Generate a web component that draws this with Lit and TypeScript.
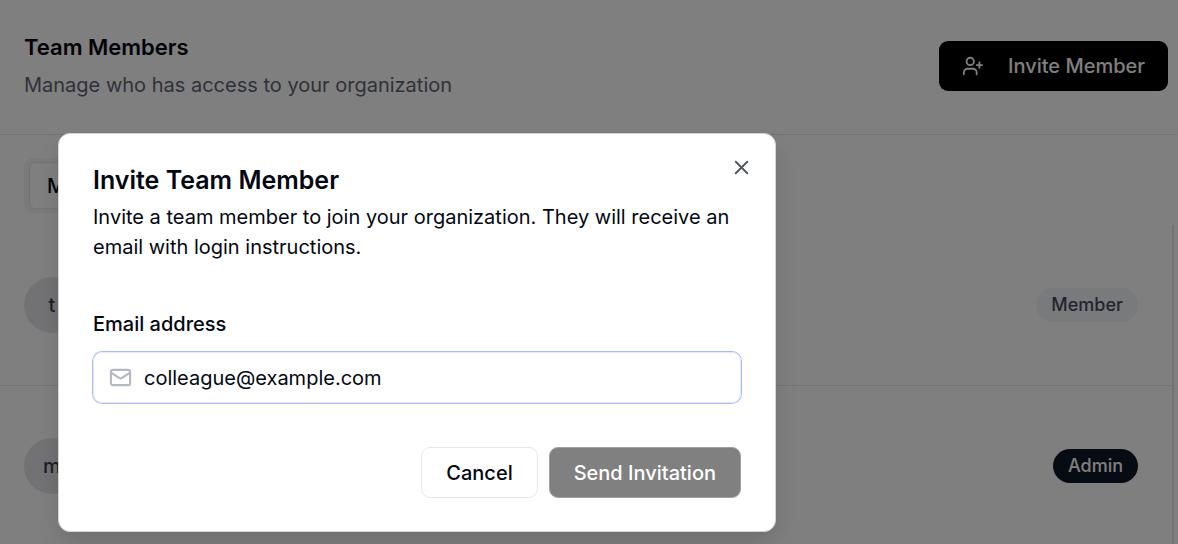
import { LitElement, html, css } from "lit";
import { customElement, property, state } from "lit/decorators.js";

type Member = { email: string; role: "Member" | "Admin" };

@customElement("member-row")
class MemberRow extends LitElement {
  @property() email = "";
  @property() role = "Member";

  static styles = css`
    :host {
      display: flex;
      align-items: center;
      justify-content: space-between;
      padding: 52px 34px 52px 24px;
      border-bottom: 1px solid #e5e7eb;
    }
    .avatar {
      display: grid;
      place-items: center;
      width: 56px;
      height: 56px;
      border-radius: 50%;
      background: #e5e5e9;
      color: #374151;
      font-size: 20px;
      font-weight: 500;
    }
    .badge {
      padding: 5px 15px;
      border-radius: 17px;
      background: #f3f4f6;
      color: #454b5b;
      font-size: 18px;
      line-height: 24px;
      font-weight: 500;
    }
    .badge.admin {
      background: #0f1626;
      color: #fff;
    }
  `;

  render() {
    return html`
      <span class="avatar">${this.email.charAt(0)}</span>
      <span class="badge ${this.role === "Admin" ? "admin" : ""}">${this.role}</span>
    `;
  }
}

@customElement("invite-dialog")
class InviteDialog extends LitElement {
  @state() private email = "";

  static styles = css`
    :host {
      display: flex;
      box-sizing: border-box;
      align-items: flex-start;
      padding: 133px 58px 0;
      background: rgba(0, 0, 0, 0.5);
    }
    .dialog {
      position: relative;
      box-sizing: border-box;
      flex: 1;
      max-width: 718px;
      padding: 32px 34px 33px;
      border: 1px solid #d4d4d4;
      border-radius: 12px;
      background: #fff;
      color: #030712;
      box-shadow: 0 12px 24px -4px rgba(0, 0, 0, 0.16);
    }
    .title {
      margin: 0;
      font-size: 25px;
      line-height: 28px;
      font-weight: 600;
    }
    .description {
      margin: 8px 0 48px;
      font-size: 20px;
      line-height: 30px;
    }
    .label {
      display: block;
      margin-bottom: 14px;
      font-size: 20px;
      line-height: 28px;
      font-weight: 500;
    }
    .field {
      display: flex;
      align-items: center;
      gap: 12px;
      box-sizing: border-box;
      height: 51px;
      padding: 0 15px;
      border: 1px solid #e5e9f2;
      border-radius: 9px;
      box-shadow: 0 0 0 1px #a3bcf9;
    }
    .field svg {
      flex: none;
      color: #b4b8c2;
    }
    .input {
      flex: 1;
      min-width: 0;
      padding: 0;
      border: 0;
      outline: 0;
      background: none;
      color: inherit;
      font: inherit;
      font-size: 20px;
    }
    .input::placeholder {
      color: #030712;
      opacity: 1;
    }
    .actions {
      display: flex;
      justify-content: flex-end;
      gap: 11px;
      margin-top: 44px;
    }
    .button {
      height: 51px;
      padding: 0 24px;
      border: 1px solid #e8e8ea;
      border-radius: 9px;
      background: #fff;
      color: #030712;
      font: inherit;
      font-size: 20px;
      font-weight: 500;
    }
    .button.primary {
      border-color: #a0a0a0;
      background: #808080;
      color: #fff;
    }
    .close {
      position: absolute;
      top: 22px;
      right: 22px;
      display: grid;
      padding: 0;
      border: 0;
      background: none;
      color: #4f535c;
    }
  `;

  render() {
    return html`
      <section class="dialog" role="dialog" aria-modal="true" aria-labelledby="title">
        <h2 class="title" id="title">Invite Team Member</h2>
        <p class="description">
          Invite a team member to join your organization. They will receive an
          email with login instructions.
        </p>
        <label class="label" for="email">Email address</label>
        <div class="field">
          <svg width="23" height="23" viewBox="0 0 24 24" fill="none" stroke="currentColor" stroke-width="2.2" stroke-linecap="round" stroke-linejoin="round">
            <rect x="2" y="4" width="20" height="16" rx="2" />
            <path d="m22 7-8.97 5.7a1.94 1.94 0 0 1-2.06 0L2 7" />
          </svg>
          <input
            class="input"
            id="email"
            type="email"
            placeholder="colleague@example.com"
            .value=${this.email}
            @input=${(e: Event) => (this.email = (e.target as HTMLInputElement).value)}
          />
        </div>
        <div class="actions">
          <button class="button" type="button">Cancel</button>
          <button class="button primary" type="button" ?disabled=${!this.email}>Send Invitation</button>
        </div>
        <button class="close" type="button" aria-label="Close">
          <svg width="23" height="23" viewBox="0 0 24 24" fill="none" stroke="currentColor" stroke-width="1.9" stroke-linecap="round">
            <path d="M18 6 6 18M6 6l12 12" />
          </svg>
        </button>
      </section>
    `;
  }
}

@customElement("app-root")
class AppRoot extends LitElement {
  private members: Member[] = [
    { email: "t", role: "Member" },
    { email: "m", role: "Admin" },
  ];

  static styles = css`
    :host {
      display: block;
      position: relative;
      height: 100vh;
      overflow: hidden;
      background: #fff;
      color: #030712;
      font-family: Inter, "Liberation Sans", sans-serif;
    }
    .header {
      display: flex;
      align-items: center;
      justify-content: space-between;
      padding: 32px 10px 34px 24px;
      border-bottom: 1px solid #e5e7eb;
    }
    .heading {
      margin: 0 0 8px;
      font-size: 22px;
      line-height: 30px;
      font-weight: 600;
    }
    .subtitle {
      margin: 0;
      color: #5f6472;
      font-size: 20px;
      line-height: 30px;
    }
    .invite {
      display: flex;
      align-items: center;
      gap: 24px;
      height: 50px;
      padding: 0 23px;
      border: 0;
      border-radius: 9px;
      background: #000;
      color: #fff;
      font: inherit;
      font-size: 20px;
      font-weight: 500;
    }
    .tabs {
      display: flex;
      width: fit-content;
      margin: 23px 24px 12px;
      padding: 4px 5px;
      border-radius: 9px;
      background: #f3f4f6;
    }
    .tab {
      height: 47px;
      padding: 0 17px;
      border: 1px solid #e5e7eb;
      border-radius: 6px;
      background: #fff;
      color: inherit;
      font: inherit;
      font-size: 20px;
      font-weight: 500;
    }
    .list {
      margin-right: 4px;
      border-right: 2px solid #e5e7eb;
    }
    .overlay {
      position: absolute;
      inset: 0;
    }
  `;

  render() {
    return html`
      <header class="header">
        <div>
          <h1 class="heading">Team Members</h1>
          <p class="subtitle">Manage who has access to your organization</p>
        </div>
        <button class="invite" type="button">
          <svg width="22" height="22" viewBox="0 0 24 24" fill="none" stroke="currentColor" stroke-width="2" stroke-linecap="round" stroke-linejoin="round">
            <path d="M16 21v-2a4 4 0 0 0-4-4H6a4 4 0 0 0-4 4v2" />
            <circle cx="9" cy="7" r="4" />
            <path d="M19 8v6M22 11h-6" />
          </svg>
          <span>Invite Member</span>
        </button>
      </header>
      <nav class="tabs">
        <button class="tab" type="button">M</button>
      </nav>
      <main class="list">
        ${this.members.map(
          (m) => html`<member-row .email=${m.email} .role=${m.role}></member-row>`
        )}
      </main>
      <invite-dialog class="overlay"></invite-dialog>
    `;
  }
}
